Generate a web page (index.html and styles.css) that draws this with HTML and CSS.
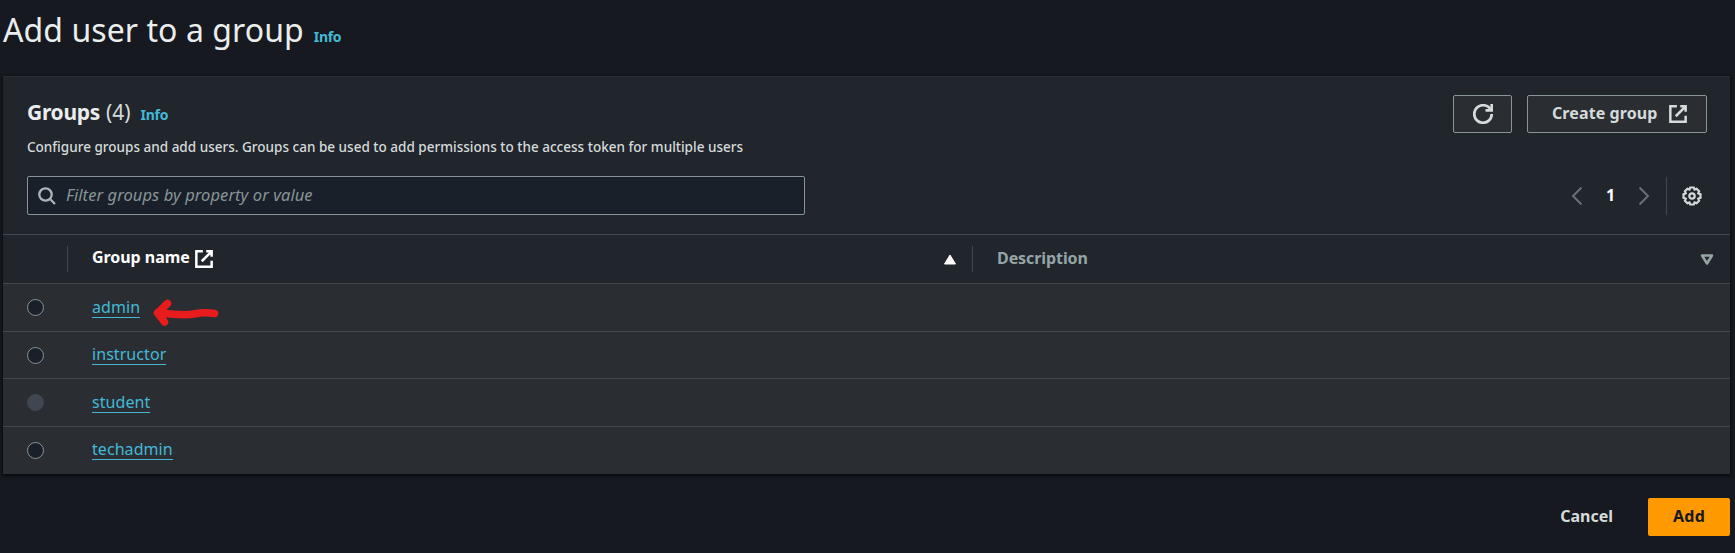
FILE: index.html
```html
<!DOCTYPE html>
<html lang="en">
<head>
<meta charset="utf-8">
<title>Add user to a group</title>
<link rel="stylesheet" href="styles.css">
</head>
<body>
<main class="page">
  <header class="page-header">
    <h1 class="page-title">Add user to a group</h1>
    <a class="info">Info</a>
  </header>
  <section class="panel">
    <div class="panel-top">
      <div class="panel-heading">
        <div class="heading-row">
          <h2 class="heading">Groups</h2><span class="counter">(4)</span><a class="info">Info</a>
        </div>
        <p class="description">Configure groups and add users. Groups can be used to add permissions to the access token for multiple users</p>
      </div>
      <div class="actions">
        <button class="btn btn-refresh" aria-label="Refresh">
          <svg class="icon" width="20" height="20" viewBox="0 0 16 16"><path d="M10 5h5V0"/><path d="M15 8a6.957 6.957 0 0 1-7 7 6.957 6.957 0 0 1-7-7 6.957 6.957 0 0 1 7-7 6.870 6.870 0 0 1 6.300 4"/></svg>
        </button>
        <button class="btn btn-create"><span class="create-label">Create group</span>
          <svg class="icon" width="18" height="18" viewBox="0 0 16 16"><path d="M10 1.200h4.800V6M14.800 1.200 6 10M14.800 9.500v5.300H1.200V1.200H7"/></svg>
        </button>
      </div>
    </div>
    <div class="tools">
      <div class="search">
        <svg class="icon icon-search" width="18" height="18" viewBox="0 0 18 18"><circle cx="7.500" cy="7.500" r="6.200"/><path d="m12 12 5 5"/></svg>
        <span class="placeholder">Filter groups by property or value</span>
      </div>
      <div class="pager">
        <svg class="chevron" width="12" height="20" viewBox="0 0 12 20"><path d="M10.500 1.500 2 10l8.500 8.500"/></svg>
        <span class="page-number">1</span>
        <svg class="chevron" width="12" height="20" viewBox="0 0 12 20"><path d="M1.500 1.500 10 10l-8.500 8.500"/></svg>
        <span class="pager-divider"></span>
        <svg class="icon gear" width="20" height="20" viewBox="0 0 20 20"><path d="M8.200 1.500h3.600l.7 2 2.100-.8 2.500 2.500-.8 2.100 2.200.9v3.600l-2.200.9.8 2.100-2.500 2.500-2.100-.8-.7 2H8.200l-.7-2-2.100.8-2.500-2.500.8-2.100-2.200-.9V8.200l2.200-.9-.8-2.100 2.500-2.500 2.100.8z"/><circle cx="10" cy="10" r="2.700"/></svg>
      </div>
    </div>
    <div class="thead">
      <div class="th th-select"></div>
      <div class="th th-name"><span class="name-label">Group name</span>
        <svg class="icon" width="18" height="18" viewBox="0 0 16 16"><path d="M10 1.200h4.800V6M14.800 1.200 6 10M14.800 9.500v5.300H1.200V1.200H7"/></svg>
        <svg class="sort" width="14" height="11" viewBox="0 0 14 11"><path class="sort-up" d="M7 1 12.500 10h-11z"/></svg>
      </div>
      <div class="th th-desc"><span class="desc-label">Description</span>
        <svg class="sort" width="14" height="11" viewBox="0 0 14 11"><path class="sort-down" d="M2 1.500h10L7 9.500z"/></svg>
      </div>
    </div>
    <div class="row"><span class="radio"></span><a class="link">admin</a>
      <svg class="arrow" width="66" height="28" viewBox="0 0 66 28"><path d="M14.500 4.500Q10 9 4.500 14L11.500 23M5 13.500Q31 17 41 15T61.500 14.500"/></svg>
    </div>
    <div class="row row-short"><span class="radio"></span><a class="link">instructor</a></div>
    <div class="row"><span class="radio radio-disabled"></span><a class="link">student</a></div>
    <div class="row row-last"><span class="radio"></span><a class="link">techadmin</a></div>
  </section>
  <footer class="footer">
    <button class="btn-cancel">Cancel</button>
    <button class="btn-add">Add</button>
  </footer>
</main>
</body>
</html>
```
FILE: styles.css
```css
* { box-sizing: border-box; }
body {
  margin: 0;
  background: #16191f;
  color: #eaeded;
  font-family: "Noto Sans", "Open Sans", sans-serif;
  font-size: 16px;
}
button { font-family: inherit; margin: 0; padding: 0; border: 0; background: none; color: inherit; }
h1, h2, p { margin: 0; }
.page { width: 1735px; height: 553px; padding: 0 5px 0 3px; overflow: hidden; }
.page-header { display: flex; align-items: baseline; height: 76px; padding-top: 6px; }
.page-title { font-size: 32px; font-weight: 400; line-height: 48px; letter-spacing: 0.070px; margin-right: 10px; white-space: nowrap; }
.info { color: #44b9d6; font-size: 14px; font-weight: 700; line-height: 20px; letter-spacing: -0.3px; }
.panel { height: 398px; background: #21252c; border-top: 1px solid #2c3036; box-shadow: 0 1px 2px 1px #0b0d11; }
.panel-top { display: flex; justify-content: space-between; padding: 18px 23px 0 24px; height: 99px; }
.heading-row { display: flex; align-items: baseline; height: 34px; padding-top: 3px; }
.heading { font-size: 21px; font-weight: 700; line-height: 28px; letter-spacing: -0.3px; margin-right: 6px; }
.counter { font-size: 21px; line-height: 28px; color: #d5dbdb; margin-right: 10px; }
.description { font-size: 13.540px; font-weight: 500; line-height: 20px; margin-top: 8px; white-space: nowrap; color: #d5dbdb; }
.actions { display: flex; gap: 15px; }
.btn { display: flex; align-items: center; height: 38px; border: 1px solid #879596; border-radius: 2px; background: #2a2e33; color: #d5dbdb; font-size: 16px; font-weight: 700; }
.btn-refresh { width: 59px; justify-content: center; }
.btn-create { width: 180px; padding: 0 19px 0 24px; justify-content: space-between; }
.create-label { white-space: nowrap; letter-spacing: 0.1px; padding-bottom: 2px; }
.icon { fill: none; stroke: #d5dbdb; stroke-width: 2.200; flex: none; }
.tools { display: flex; justify-content: space-between; padding: 0 28px 0 24px; height: 58px; }
.search { display: flex; align-items: center; width: 778px; height: 39px; border: 1px solid #879596; border-radius: 2px; background: #1a2029; padding-left: 10px; }
.icon-search { stroke: #aab7b8; stroke-width: 2.300; margin-right: 10px; }
.placeholder { color: #879596; font-style: italic; font-size: 16.500px; letter-spacing: 0.080px; white-space: nowrap; padding-bottom: 2px; }
.pager { display: flex; align-items: center; height: 39px; }
.chevron { fill: none; stroke: #687078; stroke-width: 2; }
.page-number { width: 55px; text-align: center; font-weight: 700; color: #fff; line-height: 22px; padding-bottom: 2px; }
.pager-divider { width: 1px; height: 38px; background: #414750; margin: 0 15px 0 16px; }
.thead { display: flex; align-items: center; height: 49px; border-top: 1px solid #414750; }
.th { display: flex; align-items: center; height: 26px; font-weight: 700; }
.th-select { width: 65px; border-right: 1px solid #414750; }
.th-name { width: 905px; border-right: 1px solid #414750; padding: 0 15px 0 24px; color: #fff; }
.name-label { letter-spacing: -0.050px; padding-bottom: 4px; }
.th-name .icon { stroke: #fff; margin-left: 5px; }
.th-desc { flex: 1; padding: 0 16px 0 24px; color: #95a5a6; }
.desc-label { letter-spacing: -0.080px; padding-bottom: 2px; }
.sort { margin-left: auto; }
.sort-up { fill: #fff; stroke: #fff; stroke-linejoin: round; }
.sort-down { fill: none; stroke: #95a5a6; stroke-width: 2.500; stroke-linejoin: round; }
.row { display: flex; align-items: center; height: 48px; border-top: 1px solid #414750; background: #2a2e33; padding-left: 24px; }
.row-short { height: 47px; }
.row-short .link { margin-bottom: 1px; }
.row-last .link { margin-bottom: 2px; }
.radio { width: 17px; height: 17px; border-radius: 50%; border: 1px solid #879596; background: #1a2029; margin-right: 48px; }
.radio-disabled { background: #414750; border-color: #414750; }
.link { color: #44b9d6; line-height: 20px; letter-spacing: 0.060px; border-bottom: 1px solid #44b9d6; }
.arrow { margin-left: 13px; fill: none; stroke: #e81c1c; stroke-width: 7.500; stroke-linecap: round; stroke-linejoin: round; position: relative; top: 5px; }
.footer { display: flex; justify-content: flex-end; align-items: center; gap: 35px; padding-top: 24px; }
.btn-cancel { font-size: 16px; font-weight: 700; color: #d5dbdb; padding-bottom: 2px; }
.btn-add { width: 82px; height: 38px; border-radius: 2px; background: #ff9900; color: #16191f; font-size: 16px; font-weight: 700; letter-spacing: 0.3px; padding-bottom: 2px; }
```
